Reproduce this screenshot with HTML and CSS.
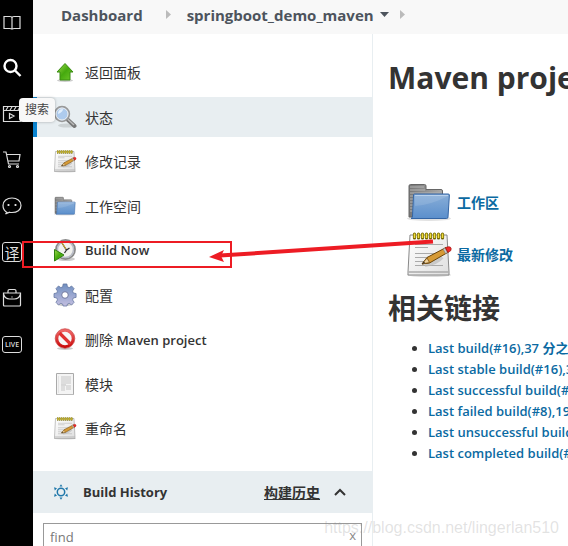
FILE: index.html
```html
<!DOCTYPE html>
<html lang="zh-CN">
<head>
<meta charset="UTF-8">
<meta name="viewport" content="width=device-width, initial-scale=1.0">
<title>springboot_demo_maven [Jenkins]</title>
<link rel="stylesheet" href="styles.css">
</head>
<body>

  <!-- Shared icons and gradients -->
  <svg class="defs" width="0" height="0" aria-hidden="true">
    <defs>
      <linearGradient id="green" x1="0" y1="0" x2="1" y2="1"><stop offset="0" stop-color="#a0dc4c"/><stop offset=".5" stop-color="#45a90e"/><stop offset="1" stop-color="#6fc92b"/></linearGradient>
      <linearGradient id="blue" x1="0" y1="0" x2="0" y2="1"><stop offset="0" stop-color="#89aed8"/><stop offset="1" stop-color="#5b8fcc"/></linearGradient>
      <linearGradient id="grey" x1="0" y1="0" x2="1" y2="0"><stop offset="0" stop-color="#777"/><stop offset="1" stop-color="#aaa"/></linearGradient>
      <linearGradient id="paper" x1="0" y1="0" x2="1" y2="1"><stop offset="0" stop-color="#fff"/><stop offset="1" stop-color="#dfdfdf"/></linearGradient>
      <linearGradient id="gearfill" x1="0" y1="0" x2="0" y2="1"><stop offset="0" stop-color="#6f8fc0"/><stop offset="1" stop-color="#c4bfe0"/></linearGradient>
      <linearGradient id="redfill" x1="0" y1="0" x2="0" y2="1"><stop offset="0" stop-color="#ef6a6a"/><stop offset="1" stop-color="#c90c0c"/></linearGradient>
    </defs>
    <symbol id="folder" viewBox="0 0 48 48">
      <ellipse cx="24" cy="40.500" rx="22" ry="2.500" fill="#e2e2e2"/>
      <path d="M4 39V8q0-1.500 1.500-1.500h14q1.500 0 1.500 1.500v3.500h15q1.500 0 1.500 1.500v26z" fill="url(#grey)" stroke="#666"/>
      <path d="M5 9h14M5 12h15M5 15h30M5 18h4M5 21h4M5 24h4M5 27h4M5 30h4M5 33h4" stroke="#b5b5b5"/>
      <path d="M8.500 17q0-1 1-1h33.500q1.500 0 1.400 1L43 39q0 1.500-1.500 1.500H6Q7.500 40 7.500 38z" fill="url(#blue)" stroke="#3465a4"/>
      <path d="M10 28q16-1 33-10v-1H10z" fill="#fff" opacity=".12"/>
      <path d="M10 17.500h33" stroke="#b9d1ec"/>
    </symbol>
    <symbol id="notepad" viewBox="0 0 48 48">
      <ellipse cx="24" cy="45" rx="22" ry="2" fill="#ddd"/>
      <path d="M5 5h37l2 37v3H3v-3z" fill="url(#paper)" stroke="#888" stroke-linejoin="round"/>
      <path d="M3.500 42h40" stroke="#aaa" stroke-width="1.500"/>
      <path d="M10 14.500h28M10 17.500h13M10 23.500h25M10 27.500h22M10 31.500h13M10 35.500h28" stroke="#aaa"/>
      <path d="M9.500 4v4M13.500 4v4M17.500 4v4M21.500 4v4M25.500 4v4M29.500 4v4M33.500 4v4M37.500 4v4" stroke="#736700" stroke-width="3.200" stroke-linecap="round"/>
      <path d="M9.500 3.500v4.500M13.500 3.500v4.500M17.500 3.500v4.500M21.500 3.500v4.500M25.500 3.500v4.500M29.500 3.500v4.500M33.500 3.500v4.500M37.500 3.500v4.500" stroke="#f0dc3c" stroke-width="1.600"/>
      <path d="M20 35q12-2 17-8" stroke="#bbb" stroke-width="4" fill="none" opacity=".7"/>
      <path d="M17 34l5-6.500 19-10 2.500 4.500-19 11z" fill="#d69a36" stroke="#6b4408"/>
      <path d="M17 34l5-6 2.500 4.500z" fill="#f0d39d" stroke="#6b4408" stroke-width=".7"/>
      <path d="M17 34l2-2.500 1 1.500z" fill="#222"/>
      <path d="M38 19l2.500 4.500 2-1L40 18z" fill="#ccc" stroke="#777" stroke-width=".6"/>
      <path d="M40.500 17.700q3-1.700 4.800-.7 1.700 1.700.4 3.800l-2.800 1.700z" fill="#ef2929" stroke="#930000" stroke-width=".6"/>
    </symbol>
  </svg>

  <nav class="rail" aria-label="工具">
    <a href="#book" aria-label="阅读"><svg viewBox="0 0 20 20"><path d="M2 4.500h6q2 0 2 1.500 0-1.500 2-1.500h6v12h-6q-2 0-2 1 0-1-2-1H2zM10 6v11"/></svg></a>
    <a href="#search" class="rail-search" aria-label="搜索"><svg viewBox="0 0 20 20"><circle cx="8.500" cy="8" r="6"/><path d="M13 12.500l5.500 5.500"/></svg></a>
    <a href="#video" aria-label="视频"><svg viewBox="0 0 20 20"><path d="M1.500 2.500h17v15h-17zM1.500 6.500h17M4 6l2-3M8 6l2-3M12 6l2-3M16 6l2-3M7.500 9.500v5l4.500-2.500z"/></svg></a>
    <a href="#shop" aria-label="购物"><svg viewBox="0 0 20 20"><path d="M1 2h3l2.500 12H17M4.500 4.500H18L17 11H6"/><circle cx="7.500" cy="16.500" r="1"/><circle cx="15.500" cy="16.500" r="1"/></svg></a>
    <a href="#chat" aria-label="聊天"><svg viewBox="0 0 20 20"><path d="M5 16.500Q1 14 1 9.500C1 5 5 2 10 2s9 3 9 7.500-4 7-9 7q-1.500 0-2.500-.3L3.500 18z"/><path d="M6.500 8v2M13.500 8v2" stroke-width="1.800"/></svg></a>
    <a href="#translate" class="rail-box rail-translate">译</a>
    <a href="#work" aria-label="工作"><svg viewBox="0 0 20 20"><path d="M6 5V3q0-1.500 1.500-1.500h5Q14 1.500 14 3v2M1.500 5h17v12q0 1-1 1h-15q-1 0-1-1zM1.500 6q1.500 5 6 5h5q4.500 0 6-5M10 8.500v1"/></svg></a>
    <a href="#live" class="rail-box rail-live">LIVE</a>
    <span class="tooltip" role="tooltip">搜索</span>
  </nav>

  <div class="page">
    <header class="breadcrumbs">
      <a href="#dashboard">Dashboard</a>
      <svg class="separator" viewBox="0 0 5 9"><path d="M0 0l5 4.500L0 9z"/></svg>
      <a href="#project" class="current">springboot_demo_maven
        <svg class="caret" viewBox="0 0 9 5"><path d="M0 0h9L4.500 5z"/></svg></a>
      <svg class="separator" viewBox="0 0 5 9"><path d="M0 0l5 4.500L0 9z"/></svg>
    </header>

    <div class="columns">
      <aside class="side-panel">
        <nav class="tasks">
          <a href="#back" class="task">
            <svg viewBox="0 0 24 24"><ellipse cx="12" cy="20.500" rx="8" ry="1.500" fill="#ccc"/><path d="M12 3.500l8 8.500h-3v8H7v-8H4z" fill="url(#green)" stroke="#3b8c13"/></svg>
            返回面板</a>
          <a href="#status" class="task active">
            <svg viewBox="0 0 24 24"><ellipse cx="14" cy="20.500" rx="9" ry="2" fill="#ccd2d4"/><path d="M14.500 14.500l7 6.500" stroke="#777" stroke-width="4" stroke-linecap="round"/><path d="M14.500 14l6.500 6" stroke="#bbb" stroke-width="1.500"/><circle cx="9" cy="9" r="7.300" fill="#aecbed" stroke="#999" stroke-width="1.800"/><circle cx="9" cy="9" r="6" fill="none" stroke="#eee"/><path d="M5 9q0-5 5-5 0 3-5 5z" fill="#e2effc"/></svg>
            状态</a>
          <a href="#changes" class="task"><svg><use href="#notepad"/></svg>修改记录</a>
          <a href="#workspace" class="task"><svg><use href="#folder"/></svg>工作空间</a>
          <a href="#build" class="task">
            <svg viewBox="0 0 24 24"><ellipse cx="13" cy="21" rx="9" ry="2" fill="#ccc"/><circle cx="12.500" cy="11.500" r="9.500" fill="#f1f1ed" stroke="#8a8a8a" stroke-width="1.800"/><circle cx="12.500" cy="11.500" r="8" fill="none" stroke="#b8bcc7" stroke-width="1.500"/><path d="M9 5l4.500 7 3-2M13.500 12l-2 3" stroke="#333" stroke-width="1.300" fill="none"/><path d="M9 5l4 6" stroke="#e4b824" stroke-width="1"/><path d="M1.500 11.500L11 17l-9.500 6z" fill="url(#green)" stroke="#2e8010"/></svg>
            <span class="latin">Build Now</span></a>
          <a href="#configure" class="task">
            <svg viewBox="0 0 24 24"><ellipse cx="12" cy="21" rx="8" ry="2" fill="#ccc"/><g fill="url(#gearfill)" stroke="#62749f" stroke-width=".8"><path d="M10 1h4l.6 3 2 .8 2.500-1.700 2.800 2.800-1.700 2.500.8 2 3 .6v4l-3 .6-.8 2 1.700 2.500-2.800 2.800-2.500-1.700-2 .8-.6 2h-4l-.6-2-2-.8-2.500 1.700-2.800-2.800 1.700-2.500-.8-2-3-.6v-4l3-.6.8-2-1.700-2.500 2.800-2.800 2.500 1.700 2-.8z" transform="translate(1 0) scale(.92 .96)"/></g><circle cx="12" cy="12" r="3.300" fill="#fff" stroke="#70789f"/></svg>
            配置</a>
          <a href="#delete" class="task">
            <svg viewBox="0 0 24 24"><ellipse cx="12" cy="21.500" rx="8" ry="1.500" fill="#ccc"/><circle cx="12" cy="11.500" r="8.200" fill="#f7f7f7" stroke="url(#redfill)" stroke-width="3"/><path d="M6.500 6l11 11" stroke="#df3030" stroke-width="3.200"/><circle cx="12" cy="11.500" r="9.800" fill="none" stroke="#c12424" stroke-width=".6"/></svg>
            <span>删除 <span class="latin">Maven project</span></span></a>
          <a href="#modules" class="task">
            <svg viewBox="0 0 24 24"><path d="M3.500 1.500h17v21h-17z" fill="#f4f4f4" stroke="#aaa"/><path d="M8 4h10v8H8zM8 14h4v5H8zM13 13h5v5h-5z" fill="#ddd"/><path d="M5.500 4v17" stroke="#e4e4e4"/><path d="M8 13h5M3 22.500h18" stroke="#bbb"/></svg>
            模块</a>
          <a href="#rename" class="task"><svg><use href="#notepad"/></svg>重命名</a>
        </nav>

        <section class="history">
          <div class="history-title">
            <svg class="weather" viewBox="0 0 16 16"><circle cx="8" cy="8" r="3.700"/><path d="M6.500 2.500h3L8 .3zM6.500 13.500h3L8 15.700zM1 3.300l3 .9-2.200 2.200zM15 3.300l-3 .9 2.200 2.200zM1 12.700l3-.9-2.200-2.200zM15 12.700l-3-.9 2.200-2.200z"/></svg>
            <h3>Build History</h3>
            <a href="#trend">构建历史</a>
            <button type="button" aria-label="收起"><svg viewBox="0 0 12 8"><path d="M1 7l5-5 5 5"/></svg></button>
          </div>
          <div class="search-box">
            <input type="text" placeholder="find" aria-label="find">
            <button type="button">x</button>
          </div>
        </section>
      </aside>

      <main class="main-panel">
        <h1>Maven project springboot_demo_maven</h1>
        <div class="shortcuts">
          <a href="#workspace"><svg><use href="#folder"/></svg>工作区</a>
          <a href="#changes"><svg><use href="#notepad"/></svg>最新修改</a>
        </div>
        <h2>相关链接</h2>
        <ul class="permalinks">
          <li><a href="#last">Last build(#16),37 分之前</a></li>
          <li><a href="#stable">Last stable build(#16),37 分之前</a></li>
          <li><a href="#successful">Last successful build(#16),37 分之前</a></li>
          <li><a href="#failed">Last failed build(#8),19 小时之前</a></li>
          <li><a href="#unsuccessful">Last unsuccessful build(#8),19 小时之前</a></li>
          <li><a href="#completed">Last completed build(#16),37 分之前</a></li>
        </ul>
      </main>
    </div>
  </div>

  <!-- Red box and arrow over Build Now -->
  <svg class="marker" viewBox="0 0 412 38" aria-hidden="true">
    <rect x="1" y="9" width="208" height="25"/>
    <path d="M411 8.500L198 22.500" class="shaft"/>
    <path d="M187 24l15-7-3 6 3 6z" class="head"/>
  </svg>
  <div class="watermark">https://blog.csdn.net/lingerlan510</div>

</body>
</html>
```
FILE: styles.css
```css
* {
  box-sizing: border-box;
}

body {
  margin: 0;
  height: 100vh;
  display: flex;
  position: relative;
  overflow: hidden;
  background: #fff;
  color: #333;
  font-family: "Open Sans", "Noto Sans CJK SC", sans-serif;
  font-size: 13px;
  font-weight: 600;
}

a {
  color: inherit;
  text-decoration: none;
}

button {
  border: none;
  background: none;
  padding: 0;
  font: inherit;
  color: inherit;
  cursor: pointer;
}

.defs {
  position: absolute;
}

/* Black tool rail */
.rail {
  position: relative;
  flex: none;
  width: 33px;
  padding: 12px 0 0 2px;
  display: flex;
  flex-direction: column;
  gap: 26px;
  background: #000;
  color: #ddd;
}

.rail a {
  width: 20px;
  height: 20px;
}

.rail svg {
  display: block;
  width: 20px;
  height: 20px;
  fill: none;
  stroke: #ddd;
  stroke-width: 1.2;
}

.rail .rail-search svg {
  stroke: #fff;
  stroke-width: 2.4;
}

.rail .rail-box {
  display: flex;
  align-items: center;
  justify-content: center;
  border: 1px solid #ddd;
  border-radius: 3px;
}

.rail-translate {
  font-size: 15px;
  font-weight: 400;
}

.rail .rail-live {
  height: 17px;
  margin-top: 2px;
  font-size: 7px;
}

.tooltip {
  position: absolute;
  left: 19px;
  top: 98px;
  z-index: 2;
  width: 36px;
  height: 24px;
  line-height: 24px;
  text-align: center;
  font-size: 12px;
  font-weight: 400;
  background: #f8f8f8;
  color: #444;
  border-radius: 4px;
  box-shadow: 0 0 3px rgba(0, 0, 0, 0.3);
}

.page {
  flex: 1;
  min-width: 0;
  display: flex;
  flex-direction: column;
}

.breadcrumbs {
  flex: none;
  height: 34px;
  padding: 0 28px 5px;
  display: flex;
  align-items: center;
  background: #f8f8f8;
  color: #4d545d;
  font-size: 15px;
  font-weight: 700;
  white-space: nowrap;
}

.separator {
  width: 5px;
  height: 9px;
  margin: 0 16px 0 23px;
  fill: #bbb;
}

.current + .separator {
  margin-left: 11px;
}

.current {
  display: flex;
  align-items: center;
  gap: 6px;
}

.caret {
  width: 9px;
  height: 5px;
  fill: #4d545d;
}

.columns {
  flex: 1;
  min-height: 0;
  display: flex;
}

/* Left menu */
.side-panel {
  flex: none;
  width: 340px;
  border-right: 1px solid #e8eef1;
}

.tasks {
  min-height: 396px;
  margin: 18px 0 23px;
  display: flex;
  flex-direction: column;
  justify-content: space-between;
}

.task {
  height: 40px;
  padding-left: 20px;
  display: flex;
  align-items: center;
  gap: 8px;
  font-size: 14px;
  font-weight: 400;
}

.task svg {
  width: 24px;
  height: 24px;
}

.latin {
  font-size: 13px;
  font-weight: 600;
}

.active {
  background: #e8eef1;
  border-left: 4px solid #0b84d0;
  padding-left: 16px;
}

.history-title {
  height: 42px;
  padding: 0 26px 0 20px;
  display: flex;
  align-items: center;
  background: #e8eef1;
}

.weather {
  width: 16px;
  height: 16px;
  fill: #1f77aa;
}

.weather circle {
  fill: none;
  stroke: #1f77aa;
  stroke-width: 1.5;
}

.history-title h3 {
  margin: 0 auto 0 14px;
  font-size: 13px;
}

.history-title a {
  font-size: 14px;
  text-decoration: underline;
}

.history-title button {
  margin-left: 14px;
}

.history-title button svg {
  display: block;
  width: 12px;
  height: 8px;
  fill: none;
  stroke: #333;
  stroke-width: 2;
}

.search-box {
  margin: 10px;
  height: 27px;
  display: flex;
  border: 1px solid #999;
  color: #888;
  font-weight: 400;
}

.search-box input {
  flex: 1;
  min-width: 0;
  border: none;
  outline: none;
  padding: 0 6px;
  background: none;
  font-family: inherit;
  font-size: 13px;
}

.search-box input::placeholder {
  color: #777;
}

.search-box button {
  padding: 0 5px 3px;
}

/* Project page */
.main-panel {
  flex: 1;
  min-width: 0;
  padding: 22px 15px;
  overflow: hidden;
  white-space: nowrap;
}

h1 {
  margin: 0;
  font-size: 30px;
  line-height: 44px;
}

.shortcuts {
  margin: 78px 0 0 17px;
  display: flex;
  flex-direction: column;
  align-items: flex-start;
  gap: 4px;
}

.shortcuts a {
  display: flex;
  align-items: center;
  gap: 4px;
  color: #0b6aa2;
  font-size: 14px;
}

.shortcuts svg {
  width: 48px;
  height: 48px;
}

h2 {
  margin: 8px 0;
  font-size: 28px;
  line-height: 44px;
}

.permalinks {
  margin: 0;
  padding-left: 40px;
  line-height: 21px;
}

.permalinks a {
  color: #0b6aa2;
}

.marker {
  position: absolute;
  left: 22px;
  top: 233px;
  width: 412px;
  height: 38px;
  fill: none;
  stroke: #ed1c24;
  stroke-width: 2;
  pointer-events: none;
}

.marker .shaft {
  stroke-width: 4;
}

.marker .head {
  fill: #ed1c24;
  stroke: none;
}

.watermark {
  position: absolute;
  right: 9px;
  bottom: 9px;
  color: rgba(140, 140, 140, 0.25);
  font: 16px "Liberation Sans", sans-serif;
  pointer-events: none;
}
```
